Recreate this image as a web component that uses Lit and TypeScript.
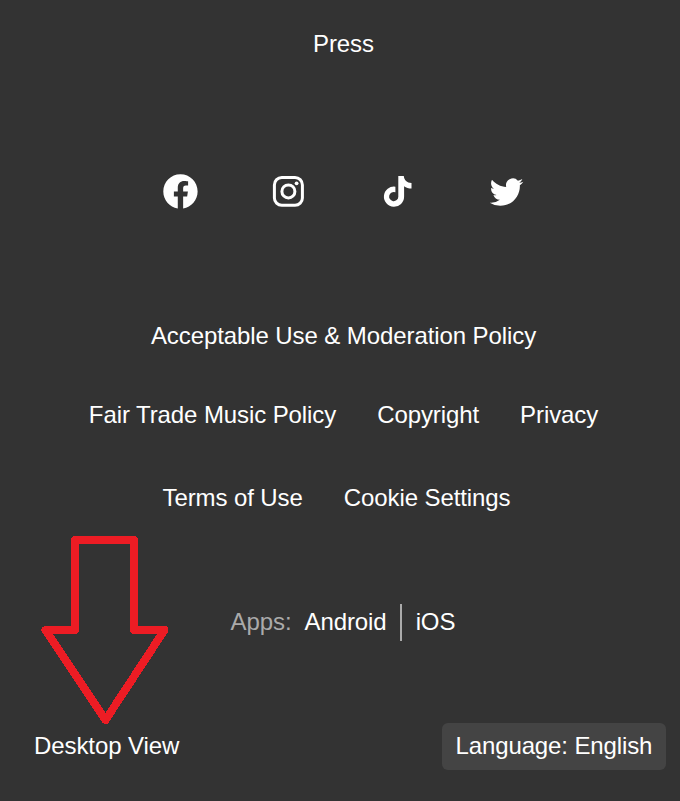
import { LitElement, html, css, svg } from "lit";
import { customElement } from "lit/decorators.js";

const facebook = svg`<path transform="translate(3.3 3.2) scale(1.43)" d="M24 12.073c0-6.627-5.373-12-12-12s-12 5.373-12 12c0 5.99 4.388 10.954 10.125 11.854v-8.385H7.4v-3.47h2.725V9.43c0-3.007 1.792-4.669 4.533-4.669 1.312 0 2.686.235 2.686.235v2.953H15.83c-1.491 0-1.956.925-1.956 1.874v2.25h3.328l-.532 3.47h-2.796v8.385C19.612 23.027 24 18.062 24 12.073z"/>`;

const instagram = svg`
  <rect x="5.4" y="6.5" width="28" height="27.8" rx="7.4" fill="none" stroke="currentColor" stroke-width="3"/>
  <circle cx="19.4" cy="20.4" r="6.5" fill="none" stroke="currentColor" stroke-width="3"/>
  <circle cx="27.6" cy="12.3" r="1.9"/>`;

const tiktok = svg`<path d="M20.3 5H25.8C26.1 8.8 29 12 33.5 12V17.5C30.8 17.5 28.1 16.6 26.1 15.2V25.6A10.1 10.1 0 1 1 17.4 15.7V21.3A4.6 4.6 0 1 0 20.3 25.7Z"/>`;

const twitter = svg`<path transform="translate(2.7 4.3) scale(1.4)" d="M23.953 4.57a10 10 0 01-2.825.775 4.958 4.958 0 002.163-2.723c-.951.555-2.005.959-3.127 1.184a4.92 4.92 0 00-8.384 4.482C7.69 8.095 4.067 6.13 1.64 3.162a4.822 4.822 0 00-.666 2.475c0 1.71.87 3.213 2.188 4.096a4.904 4.904 0 01-2.228-.616v.06a4.923 4.923 0 003.946 4.827 4.996 4.996 0 01-2.212.085 4.936 4.936 0 004.604 3.417 9.867 9.867 0 01-6.102 2.105c-.39 0-.779-.023-1.17-.067a13.995 13.995 0 007.557 2.209c9.053 0 13.998-7.496 13.998-13.985 0-.21 0-.42-.015-.63A9.935 9.935 0 0024 4.59z"/>`;

const socials = [
  { name: "Facebook", icon: facebook },
  { name: "Instagram", icon: instagram },
  { name: "TikTok", icon: tiktok },
  { name: "Twitter", icon: twitter },
];

const legal = [
  ["Acceptable Use & Moderation Policy"],
  ["Fair Trade Music Policy", "Copyright", "Privacy"],
  ["Terms of Use", "Cookie Settings"],
];

@customElement("app-root")
export class AppRoot extends LitElement {
  static styles = css`
    :host {
      display: block;
      position: relative;
      box-sizing: border-box;
      width: 680px;
      height: 801px;
      overflow: hidden;
      background: #333;
      color: #fff;
      font: 24px/28px "Liberation Sans", Arial, sans-serif;
      letter-spacing: -0.09px;
    }
    footer {
      display: flex;
      flex-direction: column;
      padding: 30px 14px 0 21px;
    }
    a {
      color: inherit;
      text-decoration: none;
      white-space: nowrap;
    }
    .row {
      display: flex;
      justify-content: center;
    }
    .social {
      gap: 69px;
      margin: 113px 0 111px;
    }
    .social a {
      display: block;
      width: 40px;
      height: 40px;
    }
    .icon {
      display: block;
      width: 40px;
      height: 40px;
      fill: currentColor;
    }
    .legal {
      display: grid;
      grid-template-rows: 79px 83px 28px;
    }
    .legal .row {
      gap: 41px;
    }
    .legal .row:last-child {
      padding-right: 14px;
    }
    .apps {
      height: 37px;
      margin-top: 92px;
      padding-right: 1px;
      line-height: 36px;
    }
    .label {
      color: #aaa;
      margin-right: 13px;
    }
    .divider {
      width: 2px;
      height: 37px;
      margin: 0 14px 0 13px;
      background: #aaa;
    }
    .bottom {
      display: flex;
      justify-content: space-between;
      margin-top: 82px;
      padding-left: 13px;
      line-height: 46px;
    }
    .language {
      box-sizing: border-box;
      width: 224px;
      height: 47px;
      padding: 0 13.5px;
      border-radius: 6px;
      background: #444;
      letter-spacing: -0.12px;
    }
    .arrow {
      position: absolute;
      left: 40px;
      top: 535px;
      width: 130px;
      height: 190px;
      fill: none;
      stroke: #ed1c24;
      stroke-width: 8;
      stroke-linejoin: round;
      shape-rendering: crispEdges;
      pointer-events: none;
    }
  `;

  render() {
    return html`
      <footer>
        <div class="row"><a>Press</a></div>
        <div class="row social">
          ${socials.map(
            (s) => html`<a aria-label=${s.name}><svg class="icon" viewBox="0 0 40 40">${s.icon}</svg></a>`
          )}
        </div>
        <div class="legal">
          ${legal.map((line) => html`<div class="row">${line.map((t) => html`<a>${t}</a>`)}</div>`)}
        </div>
        <div class="row apps">
          <span class="label">Apps:</span><a>Android</a><span class="divider"></span><a>iOS</a>
        </div>
        <div class="bottom">
          <a>Desktop View</a>
          <a class="language">Language: English</a>
        </div>
      </footer>
      <svg class="arrow" viewBox="40 535 130 190">
        <path d="M75 540H134V630H164.5L105.5 720L45.5 630H75Z" />
      </svg>
    `;
  }
}
